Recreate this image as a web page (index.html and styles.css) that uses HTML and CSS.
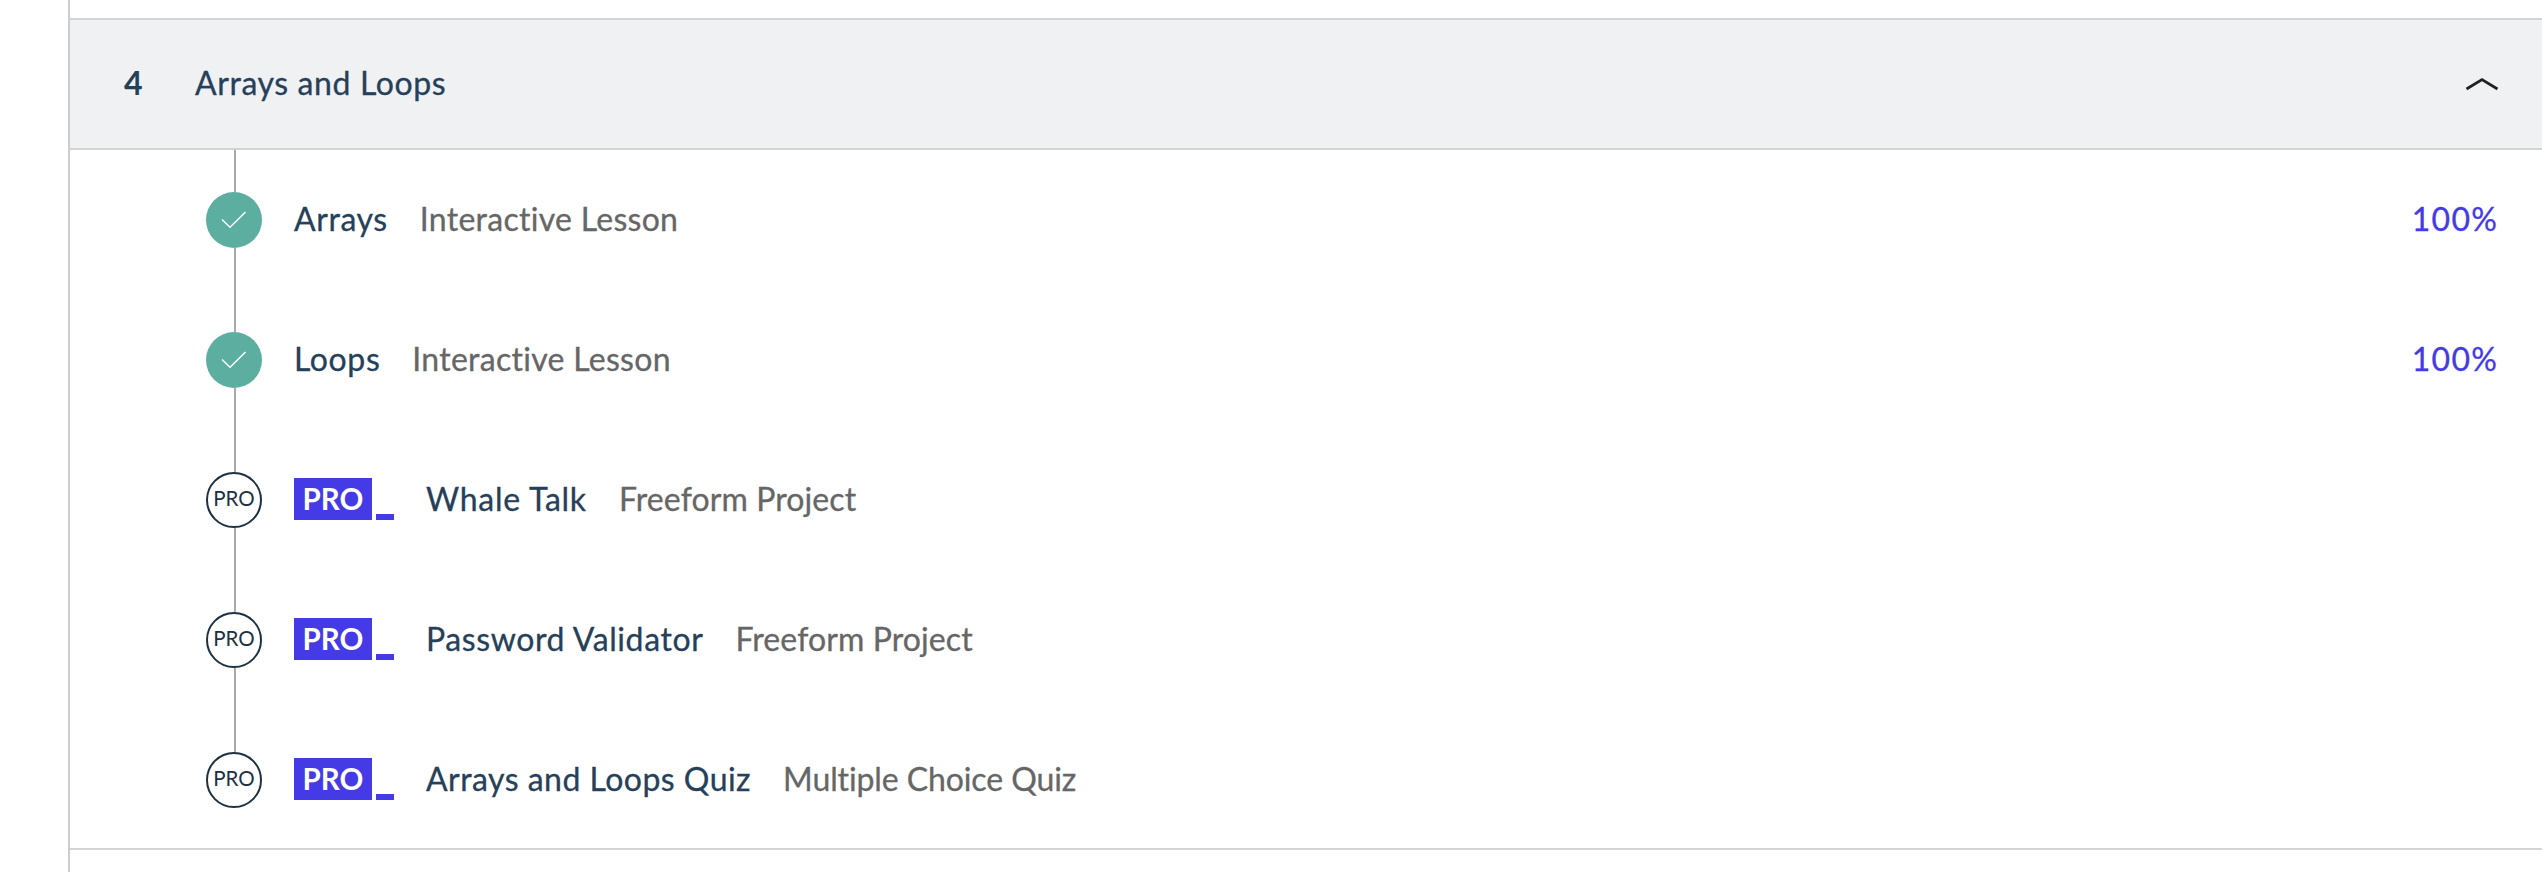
FILE: index.html
```html
<!DOCTYPE html>
<html lang="en">
<head>
<meta charset="utf-8">
<title>Arrays and Loops</title>
<link rel="stylesheet" href="styles.css">
</head>
<body>
<main class="syllabus">
  <section class="module">
    <header class="module-head">
      <span class="module-number">4</span>
      <h2 class="module-title">Arrays and Loops</h2>
      <svg class="chevron" width="34" height="14" viewBox="0 0 34 14"><path d="M1.5 12 L17 2.6 L32.500 12" fill="none" stroke="#222" stroke-width="2.8"/></svg>
    </header>
    <ul class="items">
      <li class="item">
        <div class="marker"><span class="dot done"><svg width="56" height="56" viewBox="0 0 56 56"><path d="M16 27.500 L24 35.300 L39.500 20" fill="none" stroke="#fff" stroke-width="1.400"/></svg></span></div>
        <span class="name n-arrays">Arrays</span><span class="kind k-lesson">Interactive Lesson</span><span class="percent">100%</span>
      </li>
      <li class="item">
        <div class="marker"><span class="dot done"><svg width="56" height="56" viewBox="0 0 56 56"><path d="M16 27.500 L24 35.300 L39.500 20" fill="none" stroke="#fff" stroke-width="1.400"/></svg></span></div>
        <span class="name n-loops">Loops</span><span class="kind k-lesson">Interactive Lesson</span><span class="percent">100%</span>
      </li>
      <li class="item">
        <div class="marker"><span class="dot pro">PRO</span></div>
        <span class="badge"><span class="badge-box">PRO</span><span class="badge-bar"></span></span>
        <span class="name n-whale">Whale Talk</span><span class="kind k-project">Freeform Project</span>
      </li>
      <li class="item">
        <div class="marker"><span class="dot pro">PRO</span></div>
        <span class="badge"><span class="badge-box">PRO</span><span class="badge-bar"></span></span>
        <span class="name n-password">Password Validator</span><span class="kind k-project">Freeform Project</span>
      </li>
      <li class="item">
        <div class="marker"><span class="dot pro">PRO</span></div>
        <span class="badge"><span class="badge-box">PRO</span><span class="badge-bar"></span></span>
        <span class="name n-quiz">Arrays and Loops Quiz</span><span class="kind k-quiz">Multiple Choice Quiz</span>
      </li>
    </ul>
  </section>
</main>
</body>
</html>
```
FILE: styles.css
```css
* { box-sizing: border-box; }
body {
  margin: 0;
  background: #fff;
  color: #26405a;
  font: 32px/44px Lato, "Open Sans", sans-serif;
}
.syllabus {
  height: 872px;
  margin-left: 68px;
  padding-top: 18px;
  border-left: 2px solid #cdcdcf;
  overflow: hidden;
}
.module { border-bottom: 2px solid #d4d4d6; }
.module-head {
  display: flex;
  align-items: center;
  height: 132px;
  padding: 0 43px 0 54px;
  border: solid #d2d3d5;
  border-width: 2px 0;
  background: #f0f1f3;
}
.module-number { width: 71px; padding-bottom: 3px; font-weight: 700; }
.module-title { margin: 0; padding-bottom: 3px; font-size: 32px; font-weight: 400; letter-spacing: 0.6px; }
.chevron { margin-left: auto; }
.items { height: 698px; margin: 0; padding: 0 44px 0 136px; list-style: none; }
.item { display: flex; align-items: center; height: 140px; white-space: nowrap; }
.marker {
  display: flex;
  flex-direction: column;
  width: 56px;
  height: 140px;
  margin-right: 32px;
}
.marker::before, .marker::after {
  content: "";
  flex: 1;
  width: 2px;
  margin-left: 28px;
  background: #a8a8ad;
}
.item:last-child .marker::after { background: none; }
.dot { display: block; width: 56px; height: 56px; border-radius: 50%; }
.dot svg { display: block; }
.done { background: #5cafa0; }
.pro {
  border: 2px solid #1d3143;
  color: #1d3143;
  font-size: 20.500px;
  line-height: 48px;
  text-align: center;
}
.badge { display: flex; align-items: flex-end; gap: 4px; margin-right: 32px; padding-bottom: 2px; }
.badge-box {
  width: 78px;
  height: 42px;
  background: #443ae6;
  color: #fff;
  font-size: 29.500px;
  font-weight: 700;
  line-height: 42px;
  text-align: center;
}
.badge-bar { width: 18px; height: 6.500px; background: #443ae6; }
.name, .kind, .percent { padding-bottom: 3px; }
.name, .kind, .module-title, .percent { -webkit-text-stroke: 0.3px currentColor; }
.name { margin-right: 32px; letter-spacing: 0.6px; }
.n-whale { letter-spacing: 0.75px; }
.n-quiz { letter-spacing: 0.47px; }
.kind { color: #666; }
.k-lesson { letter-spacing: 0.28px; }
.k-project { letter-spacing: 0.1px; }
.k-quiz { letter-spacing: -0.1px; }
.percent { margin-left: auto; color: #443ae6; letter-spacing: 1.2px; }
```
